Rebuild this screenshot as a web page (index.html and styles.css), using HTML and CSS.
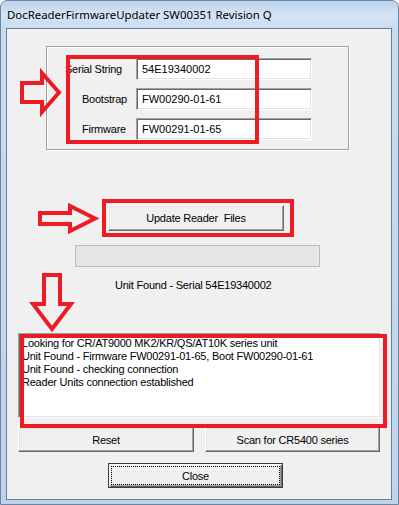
FILE: index.html
```html
<!DOCTYPE html>
<html lang="en">
<head>
  <meta charset="UTF-8">
  <title>DocReaderFirmwareUpdater</title>
  <link rel="stylesheet" href="styles.css">
</head>
<body>
<div class="window">
  <div class="titlebar">DocReaderFirmwareUpdater SW00351 Revision Q</div>
  <div class="client">
    <div class="groupbox">
      <label class="lbl lbl-serial">Serial String</label>
      <div class="field">54E19340002</div>
      <label class="lbl">Bootstrap</label>
      <div class="field">FW00290-01-61</div>
      <label class="lbl lbl-fw">Firmware</label>
      <div class="field">FW00291-01-65</div>
    </div>

    <button class="btn btn-update">Update Reader&nbsp; Files</button>
    <div class="progress"></div>
    <div class="status">Unit Found - Serial 54E19340002</div>

    <div class="log">
      <div>Looking for CR/AT9000 MK2/KR/QS/AT10K series unit</div>
      <div>Unit Found - Firmware FW00291-01-65, Boot FW00290-01-61</div>
      <div>Unit Found - checking connection</div>
      <div>Reader Units connection established</div>
    </div>

    <div class="btn-row">
      <button class="btn btn-reset">Reset</button>
      <button class="btn btn-scan">Scan for CR5400 series</button>
    </div>
    <button class="btn btn-close">Close</button>
  </div>

  <!-- red annotations drawn over the dialog -->
  <svg class="marks" width="399" height="505" viewBox="0 0 399 505">
    <g fill="none" stroke="#ed1c24" stroke-width="4">
      <rect x="68" y="57" width="189" height="85"/>
      <rect x="104" y="201" width="188" height="34"/>
      <rect x="22" y="336" width="363" height="90"/>
      <polygon points="22,83 42,83 42,73 59,92.5 42,112 42,102 22,102"/>
      <polygon points="40,213 70,213 70,206 95,218.5 70,231 70,224 40,224"/>
      <polygon points="44,275 60,275 60,304 71,304 52,329 33,304 44,304"/>
    </g>
  </svg>
</div>
</body>
</html>
```

FILE: styles.css
```css
* {
  box-sizing: border-box;
}

html, body {
  margin: 0;
  background-color: #fff;
}

body {
  font-family: "Liberation Sans", Arial, sans-serif;
  font-size: 11px;
  letter-spacing: -0.22px;
  color: #000;
}

/* window frame, win7 style */
.window {
  position: relative;
  width: 399px;
  height: 505px;
  border: 1px solid #6f859e;
  border-radius: 7px 7px 0 0;
  background: linear-gradient(180deg, #bcd4ed 0, #d4e4f5 14px, #c8dcf1 28px, #bdd4ec 100%);
}

.titlebar {
  height: 27px;
  padding-left: 6px;
  line-height: 27px;
  font-family: "Noto Sans", "Open Sans", sans-serif;
  font-size: 11.4px;
  letter-spacing: 0;
  color: #000;
}

.client {
  margin-left: 5px;
  width: 386px;
  height: 472px;
  border: 1px solid #6d7f94;
  background-color: #f0f0f0;
}

/* the box holding serial / boot / firmware */
.groupbox {
  margin: 17px 0 0 39px;
  width: 303px;
  height: 104px;
  padding-top: 11px;
  border: 1px solid #a0a0a0;
  box-shadow: 1px 1px 0 #fff, inset 1px 1px 0 #fff;
  display: grid;
  grid-template-columns: 80px 176px;
  grid-auto-rows: 22px;
  column-gap: 9px;
  row-gap: 8px;
}

.lbl {
  text-align: right;
  line-height: 22px;
  white-space: nowrap;
}

.lbl-serial {
  padding-right: 5px;
}

.lbl-fw {
  padding-right: 1px;
}

.field {
  height: 22px;
  padding-left: 5px;
  line-height: 20px;
  letter-spacing: 0;
  background-color: #fff;
  border: 1px solid;
  border-color: #a0a0a0 #fff #fff #a0a0a0;
  box-shadow: inset 1px 1px 0 #696969, inset -1px -1px 0 #e3e3e3;
}

.btn {
  display: block;
  height: 25px;
  padding: 0;
  font: inherit;
  letter-spacing: inherit;
  color: #000;
  background-color: #f0f0f0;
  border: 1px solid;
  border-color: #fff #696969 #696969 #fff;
  box-shadow: inset -1px -1px 0 #a0a0a0, inset 1px 1px 0 #e3e3e3;
}

.btn-update {
  margin: 55px 0 0 101px;
  width: 176px;
  height: 26px;
}

.progress {
  margin: 14px 0 0 68px;
  width: 245px;
  height: 22px;
  border: 1px solid #bcbcbc;
  background-color: #e6e6e6;
}

.status {
  margin-top: 12px;
  padding-left: 108px;
  line-height: 13px;
}

.log {
  margin: 41px 0 0 11px;
  width: 363px;
  height: 85px;
  padding: 3px 3px;
  line-height: 13px;
  white-space: nowrap;
  overflow: hidden;
  background-color: #fff;
  border: 1px solid;
  border-color: #a0a0a0 #fff #fff #a0a0a0;
  box-shadow: inset 1px 1px 0 #696969, inset -1px -1px 0 #e3e3e3;
}

.btn-row {
  display: flex;
  gap: 11px;
  margin: 9px 0 0 11px;
}

.btn-reset {
  width: 176px;
}

.btn-scan {
  width: 175px;
}

/* default button with focus rectangle */
.btn-close {
  margin: 11px 0 0 101px;
  width: 175px;
  border-color: #3c3c3c;
  box-shadow: inset 1px 1px 0 #fff, inset -1px -1px 0 #696969, inset -2px -2px 0 #a0a0a0;
  outline: 1px dotted #000;
  outline-offset: -4px;
}

.marks {
  position: absolute;
  top: -1px;
  left: -1px;
  pointer-events: none;
}
```
